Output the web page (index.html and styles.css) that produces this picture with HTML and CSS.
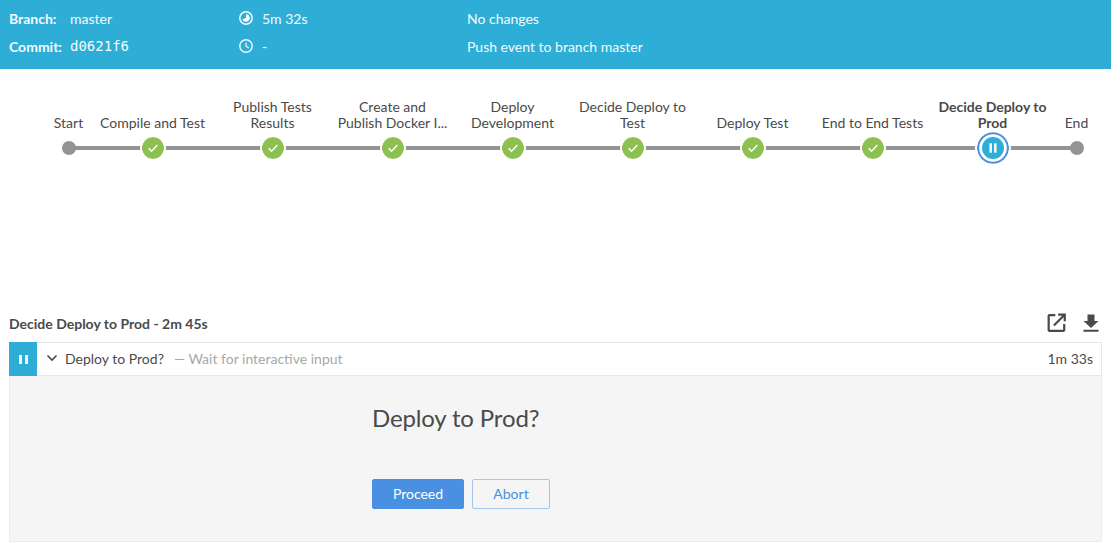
FILE: index.html
```html
<!DOCTYPE html>
<html lang="en">
<head>
  <meta charset="UTF-8">
  <meta name="viewport" content="width=device-width, initial-scale=1.0">
  <title>Decide Deploy to Prod</title>
  <link rel="stylesheet" href="styles.css">
</head>
<body>
  <header class="run-header">
    <div class="run-col run-col-source">
      <div class="run-row"><b>Branch:</b><span>master</span></div>
      <div class="run-row"><b>Commit:</b><code>d0621f6</code></div>
    </div>
    <div class="run-col run-col-time">
      <div class="run-row">
        <svg class="run-icon" viewBox="0 0 14 14"><circle cx="7" cy="7" r="6.200" fill="none" stroke="#fff" stroke-width="1.500"/><path d="M7 3.200A3.800 3.800 0 1 1 3.400 8.200L7 7z" fill="#fff"/></svg>
        <span>5m 32s</span>
      </div>
      <div class="run-row">
        <svg class="run-icon" viewBox="0 0 14 14"><circle cx="7" cy="7" r="6.200" fill="none" stroke="#fff" stroke-width="1.400"/><path d="M7 3.400V7.200L9.800 9" fill="none" stroke="#fff" stroke-width="1.200"/></svg>
        <span>-</span>
      </div>
    </div>
    <div class="run-col">
      <div class="run-row"><span>No changes</span></div>
      <div class="run-row"><span>Push event to branch master</span></div>
    </div>
  </header>

  <section class="pipeline">
    <div class="stage stage-start">
      <div class="stage-label">Start</div>
      <div class="stage-node"><span class="dot"></span></div>
    </div>
    <div class="stage">
      <div class="stage-label">Compile and Test</div>
      <div class="stage-node"><svg class="status" viewBox="0 0 22 22"><circle cx="11" cy="11" r="11" fill="#8cc04f"/><path d="M6.600 11.300l3 3 5.800-6.300" fill="none" stroke="#fff" stroke-width="1.400"/></svg></div>
    </div>
    <div class="stage">
      <div class="stage-label">Publish Tests<br>Results</div>
      <div class="stage-node"><svg class="status" viewBox="0 0 22 22"><circle cx="11" cy="11" r="11" fill="#8cc04f"/><path d="M6.600 11.300l3 3 5.800-6.300" fill="none" stroke="#fff" stroke-width="1.400"/></svg></div>
    </div>
    <div class="stage">
      <div class="stage-label">Create and<br>Publish Docker I...</div>
      <div class="stage-node"><svg class="status" viewBox="0 0 22 22"><circle cx="11" cy="11" r="11" fill="#8cc04f"/><path d="M6.600 11.300l3 3 5.800-6.300" fill="none" stroke="#fff" stroke-width="1.400"/></svg></div>
    </div>
    <div class="stage">
      <div class="stage-label">Deploy<br>Development</div>
      <div class="stage-node"><svg class="status" viewBox="0 0 22 22"><circle cx="11" cy="11" r="11" fill="#8cc04f"/><path d="M6.600 11.300l3 3 5.800-6.300" fill="none" stroke="#fff" stroke-width="1.400"/></svg></div>
    </div>
    <div class="stage">
      <div class="stage-label">Decide Deploy to<br>Test</div>
      <div class="stage-node"><svg class="status" viewBox="0 0 22 22"><circle cx="11" cy="11" r="11" fill="#8cc04f"/><path d="M6.600 11.300l3 3 5.800-6.300" fill="none" stroke="#fff" stroke-width="1.400"/></svg></div>
    </div>
    <div class="stage">
      <div class="stage-label">Deploy Test</div>
      <div class="stage-node"><svg class="status" viewBox="0 0 22 22"><circle cx="11" cy="11" r="11" fill="#8cc04f"/><path d="M6.600 11.300l3 3 5.800-6.300" fill="none" stroke="#fff" stroke-width="1.400"/></svg></div>
    </div>
    <div class="stage">
      <div class="stage-label">End to End Tests</div>
      <div class="stage-node"><svg class="status" viewBox="0 0 22 22"><circle cx="11" cy="11" r="11" fill="#8cc04f"/><path d="M6.600 11.300l3 3 5.800-6.300" fill="none" stroke="#fff" stroke-width="1.400"/></svg></div>
    </div>
    <div class="stage stage-current">
      <div class="stage-label">Decide Deploy to<br>Prod</div>
      <div class="stage-node"><svg class="status status-paused" viewBox="0 0 32 32"><circle cx="16" cy="16" r="14.800" fill="#fff" stroke="#4a90e2" stroke-width="2"/><circle cx="16" cy="16" r="11" fill="#2eaed6"/><rect x="12.400" y="11.300" width="2.600" height="9.400" fill="#fff" opacity=".9"/><rect x="17" y="11.300" width="2.600" height="9.400" fill="#fff" opacity=".9"/></svg></div>
    </div>
    <div class="stage stage-end">
      <div class="stage-label">End</div>
      <div class="stage-node"><span class="dot"></span></div>
    </div>
  </section>

  <section class="step-panel">
    <div class="step-title">
      <h2>Decide Deploy to Prod - 2m 45s</h2>
      <div class="step-actions">
        <svg class="action" viewBox="1 1.500 18 18"><path d="M8.500 2.500H3.200C2.300 2.500 1.500 3.300 1.500 4.200V16.800C1.500 17.700 2.300 18.500 3.200 18.500H15.800C16.700 18.500 17.500 17.700 17.500 16.800V11.500H15.500V16.500H3.500V4.500H8.500z" fill="#4a4a4a"/><path d="M11 2V4H14.600L6.500 12.100 7.900 13.500 16 5.400V9H18V2z" fill="#4a4a4a"/></svg>
        <svg class="action" viewBox="0 0 20 20"><path d="M6.500 1.500H13.500V8H17.500L10 15 2.500 8H6.500zM2.500 16.800H17.500V18.800H2.500z" fill="#4a4a4a"/></svg>
      </div>
    </div>
    <div class="step-row">
      <div class="step-state"><span class="pause-bar"></span><span class="pause-bar"></span></div>
      <svg class="chevron" viewBox="0 0 12 8"><path d="M1.500 1.500L6 6 10.500 1.500" fill="none" stroke="#4a4a4a" stroke-width="1.600"/></svg>
      <span class="step-name">Deploy to Prod?</span>
      <span class="step-desc">— Wait for interactive input</span>
      <span class="step-time">1m 33s</span>
    </div>
    <div class="input-box">
      <div class="input-form">
        <h1>Deploy to Prod?</h1>
        <div class="input-buttons">
          <button class="btn btn-primary">Proceed</button>
          <button class="btn btn-secondary">Abort</button>
        </div>
      </div>
    </div>
  </section>
</body>
</html>
```
FILE: styles.css
```css
body {
  margin: 0;
  font-family: Lato, "Noto Sans", sans-serif;
  font-size: 14px;
  color: #4a4a4a;
  background-color: #fff;
  overflow: hidden;
}

/* run details bar */
.run-header {
  display: flex;
  height: 69px;
  box-sizing: border-box;
  padding: 4px 0 0 9px;
  background-color: #2eaed6;
  color: #fff;
}
.run-col {
  display: flex;
  flex-direction: column;
}
.run-col-source {
  width: 230px;
}
.run-col-time {
  width: 228px;
}
.run-row {
  display: flex;
  align-items: center;
  height: 28px;
  opacity: 0.95;
}
.run-row b {
  width: 61px;
  font-weight: 700;
}
.run-row code {
  font-family: "DejaVu Sans Mono", monospace;
  font-size: 14px;
}
.run-icon {
  width: 14px;
  height: 14px;
  margin-right: 9px;
}

/* pipeline graph */
.pipeline {
  display: flex;
  height: 246px;
  box-sizing: border-box;
  padding: 30px 0 0 45px;
}
.stage {
  position: relative;
  width: 120px;
  text-align: center;
}
.stage-start,
.stage-end {
  width: 48px;
}
.stage-label {
  display: flex;
  align-items: flex-end;
  justify-content: center;
  height: 32px;
  margin-left: -1px;
  line-height: 16px;
  white-space: nowrap;
}
.stage-current .stage-label {
  font-weight: 700;
}
.stage-node {
  position: relative;
  z-index: 1;
  display: flex;
  align-items: center;
  justify-content: center;
  height: 34px;
}
/* line through the stage, drawn under the nodes */
.stage::before {
  content: "";
  position: absolute;
  left: 0;
  right: 0;
  top: 47px;
  height: 4px;
  background-color: #949393;
}
.stage-start::before {
  left: 50%;
}
.stage-end::before {
  right: 50%;
}
.dot {
  width: 14px;
  height: 14px;
  border-radius: 50%;
  background-color: #949393;
}
.status {
  width: 22px;
  height: 22px;
  border-radius: 50%;
  box-shadow: 0 0 0 2px #fff;
}
.status-paused {
  width: 32px;
  height: 32px;
}

/* selected step */
.step-panel {
  padding: 0 9px;
}
.step-title {
  display: flex;
  align-items: flex-start;
  justify-content: space-between;
  height: 27px;
}
.step-title h2 {
  margin: 0;
  font-size: 14px;
  font-weight: 700;
}
.step-actions {
  display: flex;
  gap: 14px;
  margin-top: -2px;
  padding-right: 1px;
}
.action {
  width: 20px;
  height: 20px;
}
.step-row {
  display: flex;
  align-items: center;
  height: 34px;
  box-sizing: border-box;
  border: 1px solid #e8e8e8;
  border-left: 0;
}
.step-state {
  display: flex;
  align-items: center;
  justify-content: center;
  gap: 3px;
  width: 28px;
  height: 34px;
  background-color: #2eaed6;
}
.pause-bar {
  width: 3px;
  height: 9px;
  background-color: #fff;
  opacity: 0.9;
}
.chevron {
  width: 12px;
  height: 8px;
  margin: 0 7px 2px 9px;
}
.step-name {
  margin: 0 10px 2px 0;
}
.step-desc {
  margin-bottom: 2px;
  color: #a8a8a8;
}
.step-time {
  margin: 0 0 2px auto;
  padding-right: 8px;
}
.input-box {
  height: 166px;
  box-sizing: border-box;
  border: 1px solid #ebebeb;
  border-top: 0;
  background-color: #f5f5f5;
}
.input-form {
  padding: 27px 0 0 362px;
}
.input-form h1 {
  margin: 0 0 46px;
  font-size: 24px;
  font-weight: 400;
  letter-spacing: -0.15px;
  line-height: 30px;
}
.input-buttons {
  display: flex;
  gap: 8px;
}
.btn {
  height: 30px;
  padding: 0 0 2px;
  border-radius: 2px;
  font-family: inherit;
  font-size: 14px;
}
.btn-primary {
  width: 92px;
  border: 1px solid #4a90e2;
  background-color: #4a90e2;
  color: #fff;
}
.btn-secondary {
  width: 78px;
  border: 1px solid #a4c7f0;
  background-color: transparent;
  color: #4a90e2;
}
```
